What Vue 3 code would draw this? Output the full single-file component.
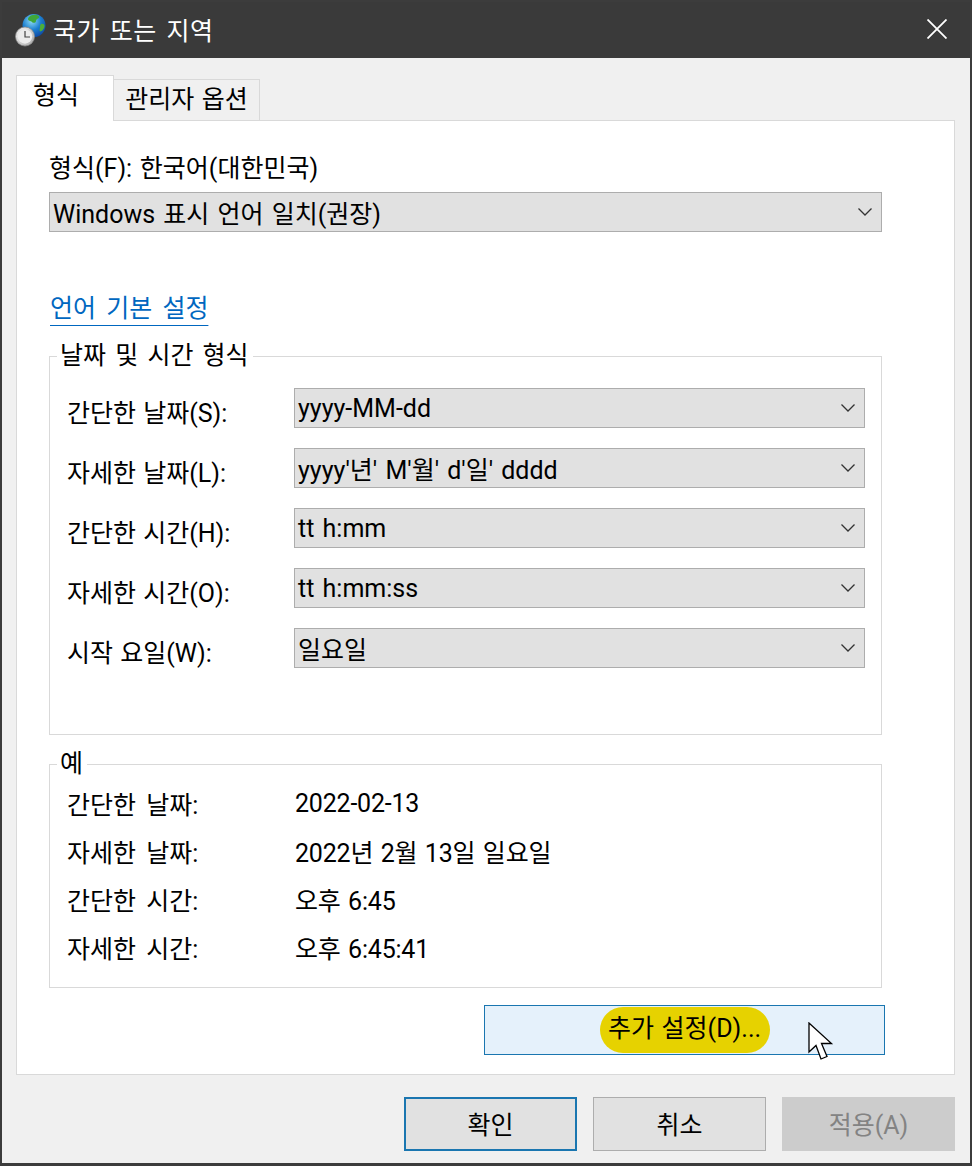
<template>
  <div class="window">
    <!-- 제목 표시줄 -->
    <div class="titlebar">
      <svg class="app-icon" viewBox="0 0 32 36" width="32" height="36">
        <defs>
          <radialGradient id="globe" cx="0.4" cy="0.3" r="0.8">
            <stop offset="0" stop-color="#8fdcf5" />
            <stop offset="0.5" stop-color="#1c7fd0" />
            <stop offset="1" stop-color="#0b3f9c" />
          </radialGradient>
          <linearGradient id="clock" x1="0" y1="0" x2="1" y2="1">
            <stop offset="0" stop-color="#f4f4f4" />
            <stop offset="1" stop-color="#a9a9a9" />
          </linearGradient>
        </defs>
        <circle cx="20" cy="12.5" r="11.5" fill="url(#globe)" />
        <path d="M17 2.5c3-1.5 7-1 8 1 1 2-3 2-3 4.500 0 2-3 2.500-4 1-1.500-1.500-4-1-4-3 0-1.500 1.500-2.800 3-3.500z" fill="#3fa63a" />
        <path d="M27 11c2-.5 3.500.5 3.500 2 0 2.500-2.500 5.500-4.500 5.500-1-1.500 0-3 0-4.500 0-1 0-2 1-3z" fill="#4caf3a" />
        <circle cx="11" cy="23.500" r="9.500" fill="url(#clock)" stroke="#8a8a8a" stroke-width="0.8" />
        <circle cx="11" cy="23.500" r="7.200" fill="#ececec" />
        <path d="M11 18v6h5" fill="none" stroke="#444" stroke-width="1.200" />
      </svg>
      <span class="title">국가 또는 지역</span>
      <svg class="close" viewBox="0 0 20 20" width="20" height="20">
        <path d="M0.5 0.5L19.5 19.5M19.5 0.5L0.5 19.5" stroke="#fff" stroke-width="1.8" fill="none" />
      </svg>
    </div>

    <div class="body">
      <div class="tabs">
        <div class="tab active">형식</div>
        <div class="tab">관리자 옵션</div>
      </div>

      <div class="panel">
        <div class="format-label">형식(F): 한국어(대한민국)</div>
        <div class="select wide">
          <span>Windows 표시 언어 일치(권장)</span>
          <svg class="chevron" viewBox="0 0 14 8" width="14" height="8"><path d="M0.5 0.5L7 7L13.5 0.5" fill="none" stroke="#333" stroke-width="1.3" /></svg>
        </div>

        <a class="link">언어 기본 설정</a>

        <fieldset class="group formats">
          <legend>날짜 및 시간 형식</legend>
          <div class="format-row" v-for="row in formats" :key="row.label">
            <label>{{ row.label }}</label>
            <div class="select">
              <span>{{ row.value }}</span>
              <svg class="chevron" viewBox="0 0 14 8" width="14" height="8"><path d="M0.5 0.5L7 7L13.5 0.5" fill="none" stroke="#333" stroke-width="1.3" /></svg>
            </div>
          </div>
        </fieldset>

        <fieldset class="group examples">
          <legend>예</legend>
          <div class="example-row" v-for="row in examples" :key="row.label">
            <label>{{ row.label }}</label>
            <span>{{ row.value }}</span>
          </div>
        </fieldset>

        <div class="more-row">
          <button class="more">
            <span class="pill">추가 설정(D)...</span>
            <svg class="cursor" viewBox="0 0 26 40" width="26" height="40">
              <path d="M1 1V30L8 23.5L13 37L19 34.5L13.5 21.5H23.5Z" fill="#fff" stroke="#000" stroke-width="1.3" stroke-linejoin="miter" />
            </svg>
          </button>
        </div>
      </div>

      <div class="footer">
        <button class="btn default">확인</button>
        <button class="btn">취소</button>
        <button class="btn disabled">적용(A)</button>
      </div>
    </div>
  </div>
</template>

<script setup>
const formats = [
  { label: "간단한 날짜(S):", value: "yyyy-MM-dd" },
  { label: "자세한 날짜(L):", value: "yyyy'년' M'월' d'일' dddd" },
  { label: "간단한 시간(H):", value: "tt h:mm" },
  { label: "자세한 시간(O):", value: "tt h:mm:ss" },
  { label: "시작 요일(W):", value: "일요일" }
];

const examples = [
  { label: "간단한 날짜:", value: "2022-02-13" },
  { label: "자세한 날짜:", value: "2022년 2월 13일 일요일" },
  { label: "간단한 시간:", value: "오후 6:45" },
  { label: "자세한 시간:", value: "오후 6:45:41" }
];
</script>

<style scoped>
.window {
  width: 972px;
  height: 1166px;
  box-sizing: border-box;
  display: flex;
  flex-direction: column;
  border: 2px solid #3c3c3c;
  border-bottom-width: 3px;
  background: #f0f0f0;
  font-family: Roboto, "Noto Sans CJK KR", sans-serif;
  font-size: 25px;
  word-spacing: 1.5px;
  color: #000;
}
.titlebar {
  height: 56px;
  flex: none;
  display: flex;
  align-items: center;
  background: #3a3a3a;
  padding: 0 23px 0 12px;
}
.app-icon {
  flex: none;
  margin-top: 2px;
}
.title {
  margin-left: 7px;
  margin-top: -3px;
  color: #fff;
  letter-spacing: 0.5px;
  word-spacing: 3px;
}
.close {
  margin-left: auto;
  margin-top: -2px;
}
.body {
  flex: 1;
  display: flex;
  flex-direction: column;
  padding: 17px 15px 0 14px;
  min-height: 0;
}
.tabs {
  display: flex;
  align-items: flex-end;
  height: 46px;
  flex: none;
  margin-bottom: -1px;
  position: relative;
  z-index: 1;
}
.tab {
  box-sizing: border-box;
  height: 42px;
  width: 147px;
  background: #f0f0f0;
  border: 1px solid #d9d9d9;
  text-align: center;
  line-height: 40px;
  white-space: nowrap;
}
.tab.active {
  width: 98px;
  height: 46px;
  background: #fff;
  border-bottom: none;
  padding-right: 18px;
  margin-right: -1px;
}
.panel {
  box-sizing: border-box;
  height: 955px;
  flex: none;
  background: #fff;
  border: 1px solid #d9d9d9;
  padding: 30px 72px 0 32px;
}
.format-label {
  height: 41px;
  line-height: 36px;
  white-space: nowrap;
}
.select {
  box-sizing: border-box;
  height: 40px;
  display: flex;
  align-items: center;
  justify-content: space-between;
  background: #e1e1e1;
  border: 1px solid #adadad;
  padding: 0 9px 0 3px;
  white-space: nowrap;
  word-spacing: 2px;
}
.wide {
  width: 833px;
}
.chevron {
  flex: none;
}
.link {
  display: inline-block;
  margin-top: 59px;
  margin-left: 1px;
  height: 36px;
  line-height: 35px;
  color: #0067c0;
  text-decoration: underline;
  text-underline-offset: 8px;
  text-decoration-thickness: 1px;
  word-spacing: 4px;
  vertical-align: top;
}
.group {
  box-sizing: border-box;
  width: 833px;
  margin: 0;
  border: 1px solid #d9d9d9;
  padding: 0;
  position: relative;
}
.group legend {
  padding: 0 4px 0 3px;
  margin-left: -10px;
  line-height: 34px;
  height: 34px;
  word-spacing: 3px;
}
.formats {
  height: 396px;
  margin-top: 12px;
  padding: 15px 16px 0 17px;
}
.format-row {
  display: flex;
  align-items: center;
  height: 40px;
  margin-bottom: 20px;
}
.format-row label {
  width: 227px;
  flex: none;
  padding-top: 6px;
  white-space: nowrap;
  word-spacing: 1px;
}
.format-row .select {
  width: 571px;
}
.examples {
  height: 241px;
  margin-top: 12px;
  padding: 0 0 0 17px;
}
.examples legend {
  margin-bottom: -2px;
}
.example-row {
  display: flex;
  align-items: center;
  height: 48px;
  white-space: nowrap;
}
.example-row label {
  width: 228px;
  flex: none;
  word-spacing: 4px;
}
.example-row span {
  letter-spacing: -0.2px;
}
.more-row {
  width: 836px;
  margin-top: 17px;
  display: flex;
  justify-content: flex-end;
}
.more {
  box-sizing: border-box;
  width: 401px;
  height: 50px;
  display: flex;
  align-items: center;
  justify-content: center;
  background: #e5f1fb;
  border: 1px solid #1a76b0;
  padding: 0;
  font: inherit;
  color: inherit;
  word-spacing: inherit;
  position: relative;
}
.pill {
  box-sizing: border-box;
  width: 170px;
  height: 46px;
  line-height: 44px;
  text-align: center;
  background: #e6d200;
  border-radius: 23px;
  white-space: nowrap;
}
.cursor {
  position: absolute;
  left: 323px;
  top: 16px;
}
.footer {
  display: flex;
  gap: 16px;
  justify-content: flex-end;
  padding: 22px 0 0 0;
}
.btn {
  box-sizing: border-box;
  width: 173px;
  height: 54px;
  background: #e1e1e1;
  border: 1px solid #adadad;
  font: inherit;
  color: #000;
  padding: 0 0 2px;
}
.btn.default {
  border: 2px solid #1a76b0;
}
.btn.disabled {
  background: #cccccc;
  border-color: #cccccc;
  color: #838383;
}
</style>

<style>
html, body {
  margin: 0;
  background: #f0f0f0;
}
</style>
